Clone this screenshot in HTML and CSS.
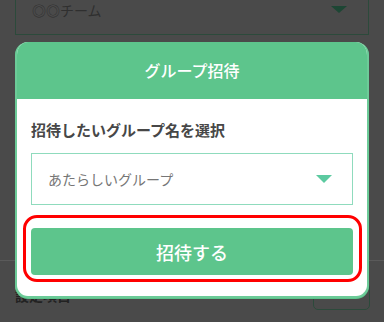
FILE: index.html
```html
<!DOCTYPE html>
<html lang="ja">
<head>
<meta charset="utf-8">
<link rel="stylesheet" href="styles.css">
</head>
<body>
<div class="page">
  <div class="bg-select">
    <span class="bg-select-text">◎◎チーム</span>
    <span class="bg-caret"></span>
  </div>
  <div class="bg-spacer"></div>
  <div class="bg-divider"></div>
  <div class="bg-bottom">
    <span class="bg-label">設定項目</span>
    <span class="bg-button"></span>
  </div>
</div>

<div class="modal">
  <div class="modal-header">グループ招待</div>
  <div class="modal-body">
    <div class="field-label">招待したいグループ名を選択</div>
    <div class="select">
      <span class="select-text">あたらしいグループ</span>
      <span class="caret"></span>
    </div>
    <div class="button-wrap">
      <button class="invite-btn">招待する</button>
      <div class="highlight"></div>
    </div>
  </div>
</div>
</body>
</html>
```

FILE: styles.css
```css
* { box-sizing: border-box; }
html, body {
  margin: 0;
  padding: 0;
  width: 384px;
  height: 322px;
  overflow: hidden;
  background: #4a4a4a;
  font-family: "Noto Sans CJK JP", "Noto Sans", sans-serif;
}
.page {
  padding: 0 15px;
}
.bg-select {
  margin-top: -22px;
  height: 57px;
  border: 1px solid #2c4a3b;
  display: flex;
  align-items: flex-end;
  justify-content: space-between;
  padding: 0 21px 14px 16px;
}
.bg-select-text {
  font-size: 14px;
  line-height: 20px;
  color: #2f2f2f;
}
.bg-caret {
  width: 0;
  height: 0;
  border-left: 8px solid transparent;
  border-right: 8px solid transparent;
  border-top: 7px solid #1d4634;
  margin-bottom: 7px;
}
.bg-spacer { height: 225px; }
.bg-divider {
  height: 1px;
  margin: 0 -15px;
  background: #5a5a5a;
}
.bg-bottom {
  display: flex;
  justify-content: space-between;
  align-items: flex-start;
  padding-top: 22px;
}
.bg-label {
  font-size: 14px;
  line-height: 20px;
  color: #222;
  font-weight: bold;
  margin-top: 2px;
}
.bg-button {
  width: 57px;
  height: 27px;
  border: 1px solid #2c4a3b;
  border-radius: 5px;
  margin-right: -1px;
}

.modal {
  position: absolute;
  left: 15px;
  top: 42px;
  width: 354px;
  height: 256px;
  background: #fff;
  border: 2px solid #6ccb98;
  border-top: none;
  border-radius: 13px;
  overflow: hidden;
  box-shadow: 0 1px 0 #5dc58c;
}
.modal-header {
  height: 57px;
  margin: 0 -2px;
  background: #5dc58c;
  color: #fff;
  font-size: 16px;
  line-height: 57px;
  text-align: center;
  font-weight: 500;
}
.modal-body {
  padding: 20px 14px 0;
}
.field-label {
  font-size: 15px;
  line-height: 22px;
  font-weight: bold;
  color: #474747;
}
.select {
  margin-top: 12px;
  height: 52px;
  border: 1px solid #8fdbbd;
  display: flex;
  align-items: center;
  justify-content: space-between;
  padding: 0 20px 0 16px;
}
.select-text {
  font-size: 14px;
  color: #767676;
  line-height: 20px;
}
.caret {
  width: 0;
  height: 0;
  border-left: 8px solid transparent;
  border-right: 8px solid transparent;
  border-top: 8px solid #5ccaa0;
}
.button-wrap {
  position: relative;
  margin-top: 23px;
}
.invite-btn {
  display: block;
  width: 100%;
  height: 47px;
  border: none;
  border-radius: 4px;
  background: #5dc58c;
  color: #fff;
  font-family: "Noto Sans CJK JP", "Noto Sans", sans-serif;
  font-size: 18px;
  font-weight: 500;
  padding: 0;
}
.highlight {
  position: absolute;
  left: -8px;
  right: -9px;
  top: -13px;
  bottom: -7px;
  border: 3px solid #ff0000;
  border-radius: 14px;
  pointer-events: none;
}
```
